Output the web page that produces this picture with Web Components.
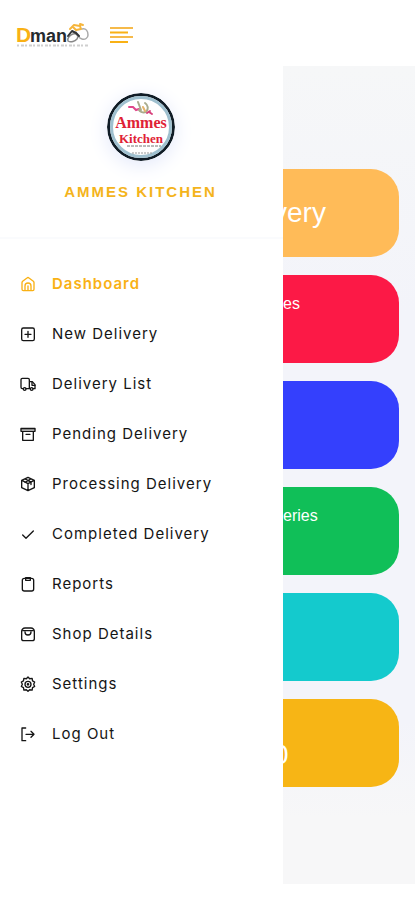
<!DOCTYPE html>
<html lang="en">
<head>
<meta charset="utf-8">
<meta name="viewport" content="width=device-width, initial-scale=1">
<title>Dman</title>
<style>
body { margin: 0; background: #fff; font-family: "Liberation Sans", Arial, sans-serif; color: #111; }
</style>
</head>
<body>
<dman-app></dman-app>
<script>
const define = (name, html, setup) => customElements.define(name, class extends HTMLElement {
  constructor() {
    super();
    this.attachShadow({ mode: 'open' });
  }
  connectedCallback() {
    const t = document.createElement('template');
    t.innerHTML = html;
    this.shadowRoot.replaceChildren(t.content.cloneNode(true));
    if (setup) setup(this, this.shadowRoot);
  }
});

const icons = {
  home: '<path d="M3 10v10a2 2 0 0 0 2 2h14a2 2 0 0 0 2-2V10a3 3 0 0 0-1-2l-6.500-5a2.200 2.200 0 0 0-3 0L4 8a3 3 0 0 0-1 2z"/><path d="M7.500 21v-6a4.500 4.500 0 0 1 9 0v6M12 15v6"/>',
  plus: '<rect x="2.500" y="3" width="19" height="19" rx="2.500"/><path d="M12 8v9M7.500 12.500h9"/>',
  truck: '<path d="M5 19H3.500a2 2 0 0 1-2-2V5.500a2 2 0 0 1 2-2H12a2 2 0 0 1 2 2V19H9M14 8.500h4.500L22.500 13v6h-3"/><circle cx="7" cy="19.500" r="2"/><circle cx="17.500" cy="19.500" r="2"/><path d="M18 9v5h4.500"/>',
  archive: '<path d="M1.500 3.500h21V8h-21zM4 8v13.500h16V8M9 12.500h6"/><path d="M2 5.500h20" stroke-opacity=".5"/>',
  box: '<path d="M12 2l9.500 4.500v11L12 22l-9.500-4.500v-11zM3 6.500l9 5 9-5M12 11.500V22M7.500 4.300l9 5v3.500M16 4.500l-8.500 5"/>',
  check: '<path d="M4 13.500l5 5L20 7.500"/>',
  clip: '<rect x="3.500" y="3.500" width="17" height="19" rx="3"/><path d="M8.500 2.500h7v4h-7z"/>',
  shop: '<path d="M2.500 8a5 5 0 0 1 5-5h9a5 5 0 0 1 5 5v11a3 3 0 0 1-3 3h-13a3 3 0 0 1-3-3z"/><path d="M4 7h16M7.500 9a4.500 4.500 0 0 0 9 0"/>',
  gear: '<path d="M12 1.500l2.500 2.600 3.700-.5.600 3.600 3.200 1.800L20.500 12.500l1.500 3.300-3.200 1.700-.6 3.600-3.700-.5L12 23l-2.500-2.400-3.700.5-.6-3.600L2 15.800l1.500-3.300L2 9l3.200-1.800.6-3.600 3.700.5z"/><circle cx="12" cy="12.500" r="4.500"/><circle cx="12" cy="12.500" r="1"/>',
  out: '<path d="M8.500 3H3v19h5.500M9 12.500h12M16.500 8l4.500 4.500-4.500 4.500"/>'
};

define('dman-logo', `
<style>
:host { display: block; }
a, svg { display: block; }
</style>
<a href="#" aria-label="Dman home">
<svg width="74" height="26" viewBox="0 0 74 26">
  <text x="0" y="20" font-family="Liberation Sans, Arial, sans-serif" font-weight="bold" font-size="21" fill="#f9b115">D</text>
  <text x="14" y="20" font-family="Liberation Sans, Arial, sans-serif" font-weight="bold" font-size="18" fill="#252a2e">man</text>
  <g fill="none" stroke-linecap="round" stroke-linejoin="round">
    <path d="M52 19c-1-3 2-6 5-7 4-1 6 2 4 5-2 2-6 4-9 2z" stroke="#888" stroke-width="1.500"/>
    <path d="M66 7c4-1 6 2 6 6 0 3-3 5-6 4-3-1-5-4-6-7" stroke="#aaa" stroke-width="1.500"/>
    <path d="M52 14l4-5 4 2 3 3" stroke="#343638" stroke-width="2"/>
    <path d="M54 7l4-4 6 1 1 3-5 1-3-3M64 2l3 1" stroke="#f6b53b" stroke-width="2"/>
  </g>
  <path d="M1 23.500h71" stroke="#cfcfcf" stroke-width="2" stroke-dasharray="2 2 3 1"/>
</svg></a>`);

define('dman-topbar', `
<style>
:host { display: flex; align-items: center; gap: 20px; height: 66px; padding: 3px 16px 0; box-sizing: border-box; background: #fff; }
button { padding: 0; border: 0; background: none; display: block; }
svg { display: block; }
</style>
<dman-logo></dman-logo>
<button type="button" aria-label="Toggle menu">
<svg width="23" height="18" viewBox="0 0 23 18" fill="none" stroke="#f6ba4a" stroke-width="2"><path d="M0 2h23M0 11h23"/><path d="M0 6.500h18M0 16h18" stroke="#f9b115"/></svg>
</button>`);

define('shop-badge', `
<style>
:host { display: block; }
svg { display: block; border-radius: 50%; box-shadow: 0 4px 20px #e3e8fa; }
</style>
<svg width="68" height="68" viewBox="0 0 68 68" role="img" aria-label="Ammes Kitchen logo">
  <circle cx="34" cy="34" r="32.500" fill="#fff" stroke="#101c26" stroke-width="3"/>
  <circle cx="34" cy="34" r="29.500" fill="none" stroke="#9fc0cf" stroke-width="3"/>
  <g fill="none" stroke-linecap="round">
    <path d="M22 14l4 0 3 3 3-1" stroke="#e0468b" stroke-width="2"/>
    <path d="M31 9l3 8M38 10c3 2 4 6 1 9-3 1-6 0-7-2" stroke="#a9ac8e" stroke-width="2"/>
    <path d="M40 20l3-2M42 19l3 2" stroke="#d8437d" stroke-width="2"/>
    <path d="M36 14l2 4" stroke="#e7b46b" stroke-width="2"/>
  </g>
  <g font-family="Liberation Serif, Times New Roman, serif" font-weight="bold" fill="#df2236" text-anchor="middle">
    <text x="34" y="35" font-size="16">Ammes</text>
    <text x="34" y="50" font-size="13">Kitchen</text>
  </g>
  <path d="M20 53h34" stroke="#777" stroke-width="1" stroke-dasharray="3 1"/>
  <path d="M25 60h20" stroke="#999" stroke-width="1" stroke-dasharray="2 1"/>
</svg>`);

define('menu-item', `
<style>
:host { display: block; }
a { display: flex; align-items: center; gap: 16px; height: 50px; padding-left: 20px; color: #151515; text-decoration: none;
  font: 400 15px/20px Inter, "Liberation Sans", sans-serif; letter-spacing: 1px; }
:host([active]) a { color: #f9b115; font-weight: 600; }
svg { display: block; width: 16px; height: 16px; fill: none; stroke: currentColor; stroke-width: 2; stroke-linecap: round; stroke-linejoin: round; }
</style>
<a href="#"><svg viewBox="0 0 24 24" aria-hidden="true"></svg><span><slot></slot></span></a>`,
(host, root) => {
  root.querySelector('svg').innerHTML = icons[host.getAttribute('icon')];
  if (host.hasAttribute('active')) root.querySelector('a').setAttribute('aria-current', 'page');
});

define('side-menu', `
<style>
:host { display: block; position: relative; z-index: 1; background: #fff; }
header { display: flex; flex-direction: column; align-items: center; gap: 21px; padding: 27px 2px 35px 0; border-bottom: 2px solid #fafbfd; }
h1 { margin: 0; color: #f4b41c; font: bold 15px/20px "Liberation Sans", Arial, sans-serif; letter-spacing: 2px; }
nav { padding-top: 20px; }
</style>
<header><shop-badge></shop-badge><h1>AMMES KITCHEN</h1></header>
<nav aria-label="Main">
  <menu-item icon="home" active>Dashboard</menu-item>
  <menu-item icon="plus">New Delivery</menu-item>
  <menu-item icon="truck">Delivery List</menu-item>
  <menu-item icon="archive">Pending Delivery</menu-item>
  <menu-item icon="box">Processing Delivery</menu-item>
  <menu-item icon="check">Completed Delivery</menu-item>
  <menu-item icon="clip">Reports</menu-item>
  <menu-item icon="shop">Shop Details</menu-item>
  <menu-item icon="gear">Settings</menu-item>
  <menu-item icon="out">Log Out</menu-item>
</nav>`);

define('stat-card', `
<style>
:host { display: flex; flex-direction: column; height: 88px; box-sizing: border-box; border-radius: 0 28px 28px 0; background: var(--tone); color: #fff; font-size: 16px; line-height: 20px; padding: 19px 10px; }
:host([large]) { font-size: 28px; line-height: 32px; padding: 28px 0; }
:host([low]) { padding: 40px 0 16px; }
</style>
<slot></slot>`);

define('dman-app', `
<style>
:host { display: block; }
.body { display: grid; grid-template-columns: 283px 1fr; min-height: 817px; }
main { display: flex; flex-direction: column; gap: 18px; margin-left: -10px; padding: 103px 16px 97px 0; background: linear-gradient(#f6f7f8, #f3f4fa 30%, #f3f4fa 80%, #f7f7f8 92%); }
</style>
<dman-topbar></dman-topbar>
<div class="body">
  <side-menu></side-menu>
  <main>
    <stat-card large style="--tone:#ffbb58">very</stat-card>
    <stat-card style="--tone:#fc1946">es</stat-card>
    <stat-card style="--tone:#3440fd"></stat-card>
    <stat-card style="--tone:#10bf58">eries</stat-card>
    <stat-card style="--tone:#14cacd"></stat-card>
    <stat-card large low style="--tone:#f7b515">0</stat-card>
  </main>
</div>`);
</script>
</body>
</html>
